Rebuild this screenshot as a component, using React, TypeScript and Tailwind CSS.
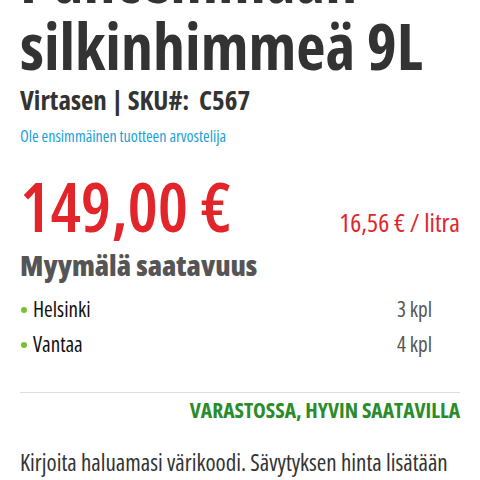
export default function App() {
  const stores = [
    { name: "Helsinki", qty: "3 kpl" },
    { name: "Vantaa", qty: "4 kpl" },
  ];
  return (
    <div
      className="w-[480px] h-[480px] overflow-hidden bg-white px-5 [font-stretch:75%]"
      style={{ fontFamily: '"Open Sans", sans-serif' }}
    >
      <h1 className="-mt-[55px] text-[64px] leading-[67px] font-bold text-[#333]">
        Puhcemmaan silkinhimmeä 9L
      </h1>
      <div className="mt-[4px] text-[27px] leading-[34px] font-bold text-[#333]">
        Virtasen | SKU#:&nbsp; C567
      </div>
      <div className="mt-[9px] text-[16px] leading-[20px] text-[#1ba1d8]">Ole ensimmäinen tuotteen arvostelija</div>
      <div className="mt-[22px] flex items-baseline justify-between">
        <span className="text-[68px] leading-[76px] font-semibold text-[#e2252b]">149,00 €</span>
        <span className="text-[26px] text-[#e2252b]">16,56 € / litra</span>
      </div>
      <h2 className="mt-[4px] text-[29px] leading-[34px] font-extrabold text-[#555]">Myymälä saatavuus</h2>
      <ul className="mt-[10px]">
        {stores.map((s) => (
          <li key={s.name} className="flex items-center justify-between pr-[28px] h-[35px]">
            <span className="flex items-center gap-[6px] text-[21px] text-[#111]">
              <span className="w-[6px] h-[6px] rounded-full bg-[#7cbf2e] ml-[1px]" />
              {s.name}
            </span>
            <span className="text-[21px] text-[#555]">{s.qty}</span>
          </li>
        ))}
      </ul>
      <div className="mt-[30px] border-t border-[#dddddd]" />
      <div className="mt-[3px] text-right text-[21.5px] leading-[28px] font-bold text-[#2a8c2a]">
        VARASTOSSA, HYVIN SAATAVILLA
      </div>
      <p className="mt-[23px] text-[23px] leading-[30px] text-[#333]">
        Kirjoita haluamasi värikoodi. Sävytyksen hinta lisätään
      </p>
    </div>
  );
}
